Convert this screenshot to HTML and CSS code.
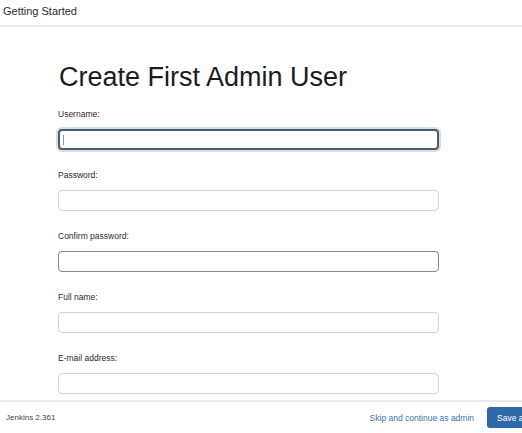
FILE: index.html
```html
<!DOCTYPE html>
<html lang="en">
<head>
    <meta charset="UTF-8">
    <meta name="viewport" content="width=device-width, initial-scale=1.0">
    <title>Getting Started</title>
    <link rel="stylesheet" href="styles.css">
</head>
<body>
    <div class="dialog">
        <div class="dialog-header">Getting Started</div>
        <div class="dialog-body">
            <h1>Create First Admin User</h1>
            <form id="adminForm">
                <div class="field">
                    <label for="username">Username:</label>
                    <div class="input-wrap">
                        <input type="text" id="username" class="focused">
                        <span class="caret"></span>
                    </div>
                </div>
                <div class="field">
                    <label for="password1">Password:</label>
                    <input type="password" id="password1">
                </div>
                <div class="field">
                    <label for="password2">Confirm password:</label>
                    <input type="password" id="password2" class="hovered">
                </div>
                <div class="field">
                    <label for="fullname">Full name:</label>
                    <input type="text" id="fullname">
                </div>
                <div class="field">
                    <label for="email">E-mail address:</label>
                    <input type="text" id="email">
                </div>
            </form>
        </div>
        <div class="dialog-footer">
            <span class="version">Jenkins 2.361</span>
            <div class="actions">
                <a href="#" class="skip">Skip and continue as admin</a>
                <button type="button" class="save">Save and Finish</button>
            </div>
        </div>
    </div>
</body>
</html>
```

FILE: styles.css
```css
html, body {
    margin: 0;
    padding: 0;
    height: 100%;
    overflow: hidden;
    background: white;
}
body {
    font-family: "Liberation Sans", Arial, sans-serif;
    color: #333;
}
.dialog {
    width: 578px;
    height: 100vh;
    display: flex;
    flex-direction: column;
}
.dialog-header {
    height: 25px;
    line-height: 23px;
    padding-left: 3px;
    font-size: 11px;
    color: #2b2b2b;
    border-bottom: 2px solid #ececec;
    flex-shrink: 0;
}
.dialog-body {
    flex: 1;
    overflow: hidden;
    padding: 34px 0 0 58px;
}
h1 {
    margin: 0 0 15px 1px;
    font-size: 27px;
    line-height: 32px;
    font-weight: normal;
    color: #1c1c1e;
}
.field {
    margin-bottom: 19px;
}
.field label {
    display: block;
    font-size: 8.5px;
    line-height: 12px;
    color: #2a2a2a;
    margin-bottom: 9px;
}
.input-wrap {
    position: relative;
    width: 381px;
}
.field input {
    display: block;
    box-sizing: border-box;
    width: 381px;
    height: 21px;
    margin: 0;
    padding: 0 6px;
    border: 1px solid #d2d4d6;
    border-radius: 4px;
    background: white;
    outline: none;
}
.field input.focused {
    border: 2px solid #4d5c6b;
    box-shadow: 0 0 0 2px rgba(120, 160, 205, 0.35);
}
.field input.hovered {
    border: 1.5px solid #7d8893;
}
.caret {
    position: absolute;
    left: 5px;
    top: 6px;
    width: 1px;
    height: 10px;
    background: #9a9a9a;
}
.dialog-footer {
    height: 31px;
    border-top: 2px solid #ebebeb;
    display: flex;
    align-items: center;
    justify-content: space-between;
    padding: 0 10px 0 6px;
    flex-shrink: 0;
}
.version {
    font-size: 8px;
    color: #444;
}
.actions {
    display: flex;
    align-items: center;
}
.skip {
    font-size: 8.5px;
    color: #3a72ad;
    text-decoration: none;
    margin-right: 13px;
}
.save {
    height: 21px;
    padding: 0 10px;
    border: none;
    border-radius: 3px;
    background-color: #2f6aa6;
    color: white;
    font-family: "Liberation Sans", Arial, sans-serif;
    font-size: 8.5px;
    cursor: pointer;
}
```
